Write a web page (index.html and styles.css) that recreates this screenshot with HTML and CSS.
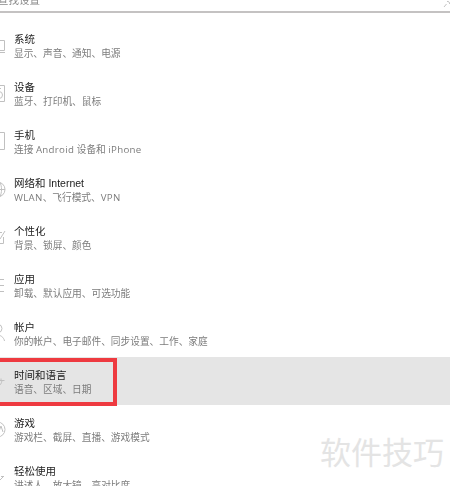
FILE: index.html
```html
<!DOCTYPE html>
<html lang="zh-CN">
  <head>
    <meta charset="UTF-8" />
    <title>设置</title>
    <link rel="stylesheet" href="styles.css">
  </head>
  <body>
    <div class="search">
      <span class="search-text">查找设置</span>
      <svg class="search-icon" viewBox="0 0 8 8"><path d="M1 7l2.500-3M4 1.500a2 2 0 0 1 2.500 2.500" /></svg>
    </div>

    <div class="list">
      <div class="item">
        <svg class="icon" viewBox="0 0 14 18"><path d="M-8 4.500H4.500V14.500H-8M-8 16.500H5" /></svg>
        <div class="text"><div class="name">系统</div><div class="desc">显示、声音、通知、电源</div></div>
      </div>
      <div class="item">
        <svg class="icon" viewBox="0 0 14 18"><path d="M-6 1.500H4.500V17.500H-6zM-2 4.500H1" /><circle cx="-1" cy="11" r="3.500" /></svg>
        <div class="text"><div class="name">设备</div><div class="desc">蓝牙、打印机、鼠标</div></div>
      </div>
      <div class="item">
        <svg class="icon" viewBox="0 0 14 18"><path d="M-6 .5H4.500V17.500H-6z" /></svg>
        <div class="text"><div class="name">手机</div><div class="desc">连接 <span class="latin">Android</span> 设备和 <span class="latin">iPhone</span></div></div>
      </div>
      <div class="item">
        <svg class="icon" viewBox="0 0 14 18"><circle cx="-2.500" cy="9.500" r="7.500" /><path d="M-10 9.500H5M0 2.500C2 6 2 13 0 16.500" /></svg>
        <div class="text"><div class="name">网络和 Internet</div><div class="desc"><span class="latin">WLAN</span>、飞行模式、<span class="latin">VPN</span></div></div>
      </div>
      <div class="item">
        <svg class="icon" viewBox="0 0 14 18"><path d="M-5 4.500H2M3.500 9V15.500H-5M0 11L5 3" /></svg>
        <div class="text"><div class="name">个性化</div><div class="desc">背景、锁屏、颜色</div></div>
      </div>
      <div class="item">
        <svg class="icon" viewBox="0 0 14 18"><path d="M0 3.500H4M0 9.500H4M0 15.500H4" /></svg>
        <div class="text"><div class="name">应用</div><div class="desc">卸载、默认应用、可选功能</div></div>
      </div>
      <div class="item">
        <svg class="icon" viewBox="0 0 14 18"><circle cx="-2" cy="4.500" r="4" /><path d="M-9 17C-9 9 3 9 4.500 17" /></svg>
        <div class="text"><div class="name">帐户</div><div class="desc">你的帐户、电子邮件、同步设置、工作、家庭</div></div>
      </div>
      <div class="item active">
        <svg class="icon" viewBox="0 0 14 18"><path d="M-2 8.500H4.500M1 6.500V8.500M2 8.500C1.500 11.500 .5 13 -2 14" /></svg>
        <div class="text"><div class="name">时间和语言</div><div class="desc">语音、区域、日期</div></div>
      </div>
      <div class="item">
        <svg class="icon" viewBox="0 0 14 18"><circle cx="-2.500" cy="9.500" r="7.500" /><path d="M-2 14L1 6L3 12" /></svg>
        <div class="text"><div class="name">游戏</div><div class="desc">游戏栏、截屏、直播、游戏模式</div></div>
      </div>
      <div class="item">
        <svg class="icon" viewBox="0 0 14 18"><path d="M0 12L4 8M1 8.500H3" /></svg>
        <div class="text"><div class="name">轻松使用</div><div class="desc">讲述人、放大镜、高对比度</div></div>
      </div>
    </div>

    <div class="highlight"></div>
    <div class="watermark">软件技巧</div>
  </body>
</html>
```

FILE: styles.css
```css
body {
  margin: 0;
  height: 486px;
  overflow: hidden;
  position: relative;
  background: #fff;
  font-family: "Open Sans", "Noto Sans CJK SC", sans-serif;
}

.search {
  height: 11px;
  border-bottom: 2px solid #c4c2c2;
  display: flex;
  justify-content: space-between;
  align-items: flex-start;
  overflow: hidden;
}

.search-text {
  font-size: 10.5px;
  line-height: 12px;
  margin-top: -6px;
  margin-left: -2px;
  color: #8a8a8a;
  filter: blur(0.4px);
}

.search-icon {
  width: 8px;
  height: 8px;
  margin-right: -1px;
  fill: none;
  stroke: #c4c4c4;
  stroke-width: 1;
}

.list {
  padding-top: 8px;
}

.item {
  height: 48px;
  display: flex;
  align-items: center;
}

.active {
  background: #e5e5e5;
}

.icon {
  width: 14px;
  height: 18px;
  flex: none;
  fill: none;
  stroke: #c0c0c0;
  stroke-width: 1;
  filter: blur(0.4px);
}

.text {
  padding-top: 2px;
  filter: blur(0.4px);
}

.name {
  font-family: "Liberation Sans", "Noto Sans CJK SC", sans-serif;
  font-size: 10.5px;
  line-height: 15px;
  color: #1c1c1c;
}

.desc {
  font-size: 9.7px;
  line-height: 14px;
  color: #7c7c7c;
}

.latin {
  letter-spacing: 0.3px;
}

.highlight {
  position: absolute;
  left: -4px;
  top: 358px;
  width: 121px;
  height: 48px;
  box-sizing: border-box;
  border: 4px solid #ee3a40;
}

.watermark {
  position: absolute;
  left: 320px;
  top: 431px;
  font-size: 31px;
  line-height: 42px;
  white-space: nowrap;
  color: #e4e4e4;
}
```
